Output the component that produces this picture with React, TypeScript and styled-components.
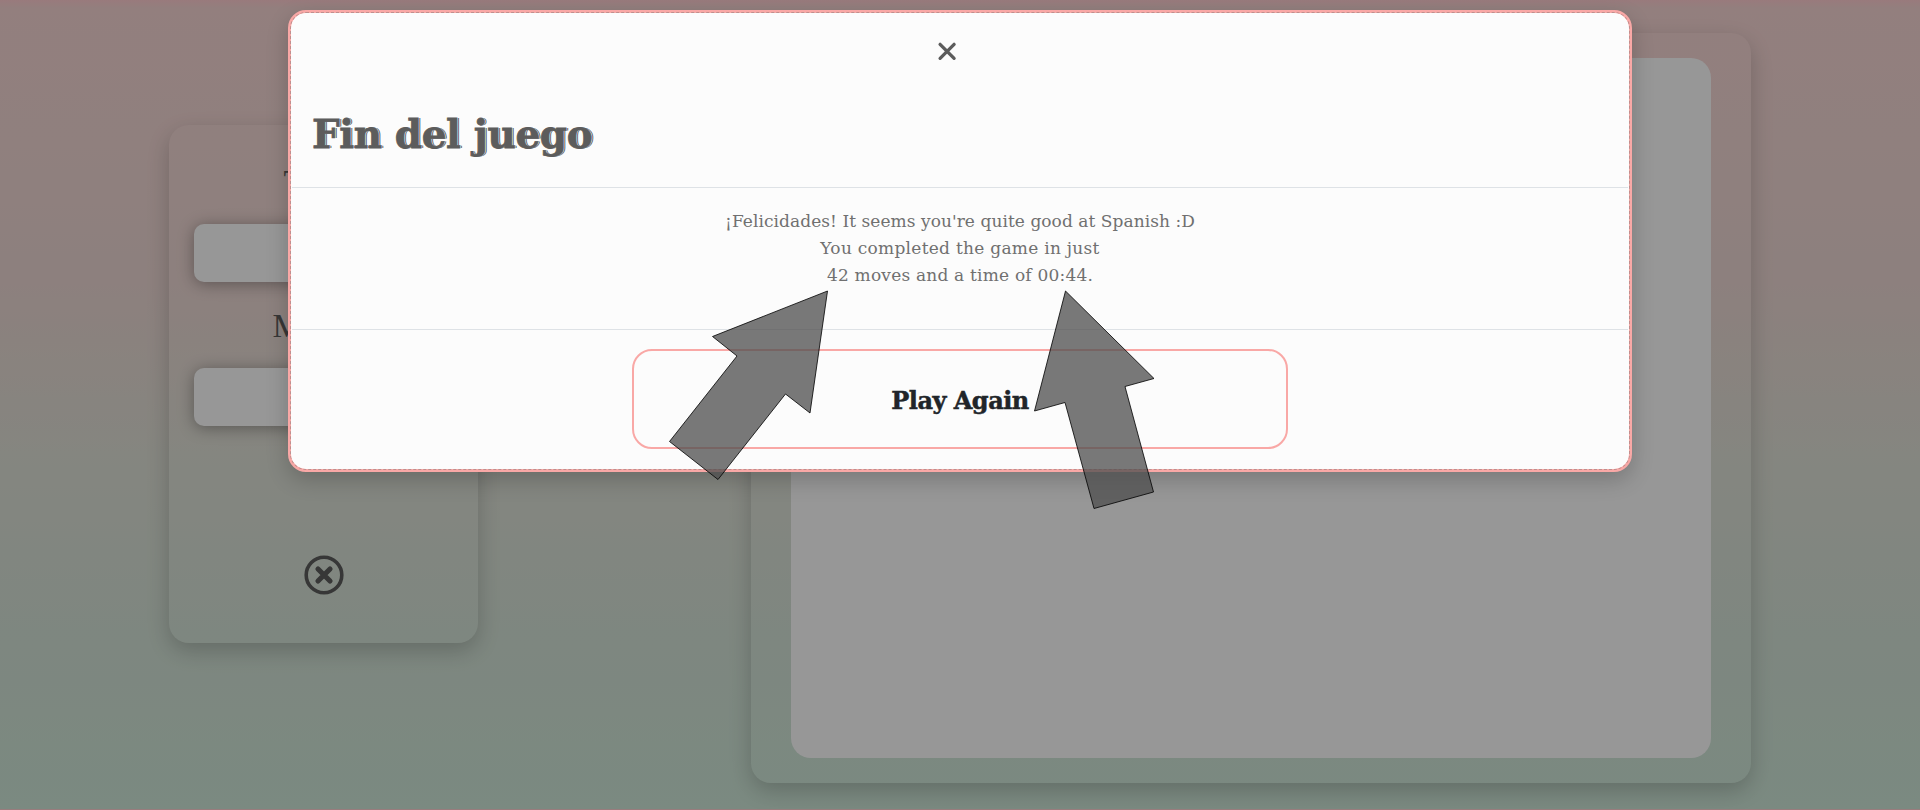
import React from "react";
import styled, { createGlobalStyle } from "styled-components";

const Global = createGlobalStyle`
  * { box-sizing: border-box; }
  html { background: #ffcfd0; }
  body {
    margin: 0;
    overflow: hidden;
    font-family: "DejaVu Serif", serif;
    color: #5c5c5c;
  }
`;

const Page = styled.div`
  height: 809px;
  display: flex;
  align-items: flex-start;
  padding: 33px 169px 0;
  background: linear-gradient(180deg, #ffcccf 0, #f5d4d2 8px, #ebd6d2 35%, #dedfd5 56%, #d2e1d5 80%, #cde6d7 100%);
`;

const shadow = "0 8px 22px rgba(0, 0, 0, 0.2)";

const ScorePanel = styled.aside`
  width: 309px;
  height: 518px;
  margin-top: 92px;
  padding: 29px 25px 0;
  border-radius: 20px;
  box-shadow: ${shadow};
  display: flex;
  flex-direction: column;
  align-items: center;
`;

const ScoreLabel = styled.h2<{ $top: number; $height: number }>`
  margin: 0;
  padding-top: ${(p) => p.$top}px;
  height: ${(p) => p.$height}px;
  line-height: 56px;
  font-family: "Liberation Serif", serif;
  font-size: 34px;
  font-weight: 400;
`;

const ScoreBox = styled.div`
  width: 100%;
  height: 58px;
  border-radius: 10px;
  background: #fcfcfc;
  box-shadow: 0 2px 16px rgba(0, 0, 0, 0.35);
`;

const ResetIcon = styled.svg`
  width: 40px;
  height: 40px;
  margin-top: 129px;
`;

const Board = styled.main`
  width: 1000px;
  height: 750px;
  margin-left: 273px;
  padding: 25px 40px;
  border-radius: 20px;
  box-shadow: ${shadow};
`;

const BoardSurface = styled.div`
  height: 100%;
  border-radius: 20px;
  background: #fcfcfc;
`;

const Backdrop = styled.div`
  position: absolute;
  inset: 0;
  background: rgba(0, 0, 0, 0.4);
  display: flex;
  justify-content: center;
  align-items: flex-start;
  padding-top: 10px;
`;

const Dialog = styled.div`
  width: 1344px;
  height: 462px;
  border: 2px solid #f9a8a6;
  border-radius: 18px;
  background: #f9a8a6;
  box-shadow: ${shadow};
`;

const DialogBody = styled.div`
  height: 100%;
  border: 1px dashed #c08f8d;
  border-radius: 16px;
  background: #fcfcfc;
  background-clip: padding-box;
  padding: 0 1px;
  display: flex;
  flex-direction: column;
`;

const Header = styled.header`
  height: 175px;
  border-bottom: 1px solid #dee2e6;
  padding: 26px 20px 0;
`;

const CloseRow = styled.div`
  display: flex;
  justify-content: center;
  padding-right: 26px;
`;

const CloseIcon = styled.svg`
  width: 24px;
  height: 24px;
`;

const Title = styled.h1`
  margin: 41px 0 0;
  font-size: 39px;
  line-height: 60px;
  font-weight: 700;
  white-space: nowrap;
  letter-spacing: -0.4px;
  -webkit-text-stroke: 0.8px #5c5c5c;
  text-shadow: 1px 0 #fcfcfc, 2px 0 #5c5c5c;
`;

const Message = styled.section`
  height: 142px;
  border-bottom: 1px solid #dee2e6;
  padding-top: 20px;
  text-align: center;
  font-size: 17px;
  line-height: 27px;
  color: #707070;
`;

const Line = styled.div<{ $spacing: number }>`
  letter-spacing: ${(p) => p.$spacing}px;
`;

const Footer = styled.footer`
  display: flex;
  justify-content: center;
  padding-top: 19px;
`;

const PlayButton = styled.button`
  width: 656px;
  height: 100px;
  padding: 2px 0 0;
  border: 2px solid #f9a8a6;
  border-radius: 20px;
  background: transparent;
  font-family: "DejaVu Serif", serif;
  font-size: 24px;
  font-weight: 700;
  letter-spacing: -0.5px;
  color: #212529;
  -webkit-text-stroke: 0.5px #212529;
`;

const Arrows = styled.svg`
  position: absolute;
  left: 0;
  top: 0;
  width: 1920px;
  height: 810px;
  pointer-events: none;
`;

export default function App() {
  return (
    <>
      <Global />
      <Page>
        <ScorePanel>
          <ScoreLabel $top={0} $height={70}>Time:</ScoreLabel>
          <ScoreBox />
          <ScoreLabel $top={16} $height={86}>Moves:</ScoreLabel>
          <ScoreBox />
          <ResetIcon viewBox="0 0 40 40" fill="none" stroke="#5c5c5c">
            <circle cx="20" cy="20" r="17.8" strokeWidth="3.6" />
            <path d="M14 14l12 12M26 14L14 26" strokeWidth="5.2" strokeLinecap="round" />
          </ResetIcon>
        </ScorePanel>
        <Board>
          <BoardSurface />
        </Board>
      </Page>
      <Backdrop>
        <Dialog role="dialog">
          <DialogBody>
            <Header>
              <CloseRow>
                <CloseIcon viewBox="0 0 24 24" stroke="#5c5c5c" strokeWidth="3.3" strokeLinecap="round">
                  <path d="M5.1 5.3l14 14M19.1 5.3l-14 14" />
                </CloseIcon>
              </CloseRow>
              <Title>Fin del juego</Title>
            </Header>
            <Message>
              <Line $spacing={0.06}>¡Felicidades! It seems you're quite good at Spanish :D</Line>
              <Line $spacing={0.27}>You completed the game in just</Line>
              <Line $spacing={0.2}>42 moves and a time of 00:44.</Line>
            </Message>
            <Footer>
              <PlayButton>Play Again</PlayButton>
            </Footer>
          </DialogBody>
        </Dialog>
      </Backdrop>
      <Arrows viewBox="0 0 1920 810" fill="rgba(80,80,80,0.77)" stroke="rgba(0,0,0,0.8)" strokeWidth="1">
        <path d="M827.5 291L810 413L785.5 394L718 479.5L669.5 441.5L737 356L712.5 336.5Z" />
        <path d="M1065.5 291L1154 378.5L1125 386.5L1153.5 492L1094 508.5L1065 402.5L1034.5 411Z" />
      </Arrows>
    </>
  );
}
